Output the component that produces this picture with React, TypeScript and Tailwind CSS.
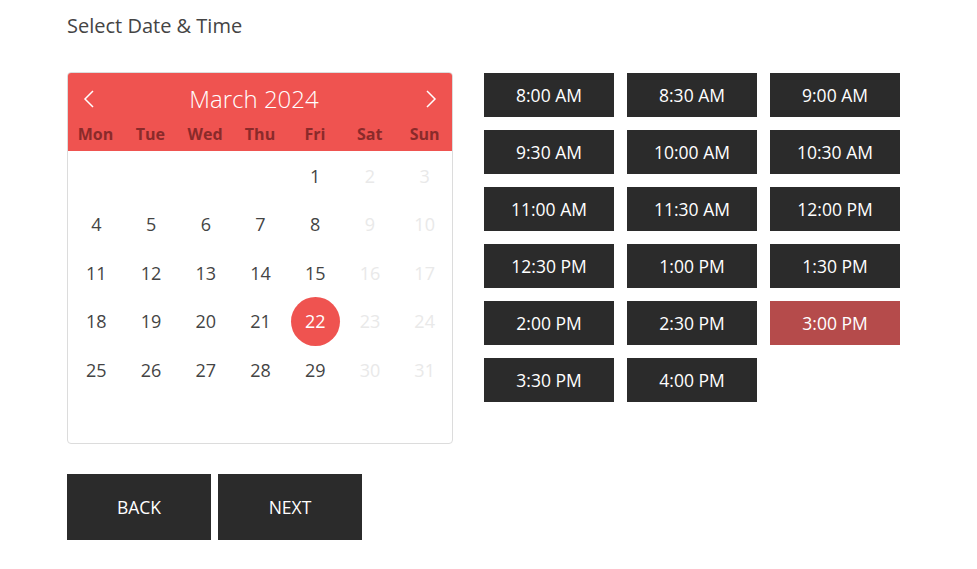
import React from "react";

const SLOTS = [
  "8:00 AM", "8:30 AM", "9:00 AM",
  "9:30 AM", "10:00 AM", "10:30 AM",
  "11:00 AM", "11:30 AM", "12:00 PM",
  "12:30 PM", "1:00 PM", "1:30 PM",
  "2:00 PM", "2:30 PM", "3:00 PM",
  "3:30 PM", "4:00 PM",
];

const DAYS = ["Mon", "Tue", "Wed", "Thu", "Fri", "Sat", "Sun"];

export default function App() {
  const [day, setDay] = React.useState(22);
  const [slot, setSlot] = React.useState("3:00 PM");

  // March 2024 starts on a Friday (index 4)
  const cells: (number | null)[] = [];
  for (let i = 0; i < 4; i++) cells.push(null);
  for (let d = 1; d <= 31; d++) cells.push(d);

  return (
    <div className="min-h-screen bg-white pl-[67px] pt-[12px] font-['Open_Sans',sans-serif]">
      <div className="text-[20px] leading-[28px] text-[#444]">Select Date &amp; Time</div>

      <div className="mt-[32px] flex gap-[31px]">
        <div className="w-[386px] h-[372px] rounded-[4px] border border-[#dcdcdc] overflow-hidden">
          <div className="bg-[#ef5350] h-[78px]">
            <div className="flex items-center justify-between px-[14px] pt-[2px] h-[50px]">
              <Chevron dir="left" />
              <div className="mr-[12px] text-[24px] font-light text-white leading-[32px]">March 2024</div>
              <Chevron dir="right" />
            </div>
            <div className="grid grid-cols-7 text-center text-[16px] font-bold text-[#8a2a2a] leading-[22px]">
              {DAYS.map(d => <div key={d}>{d}</div>)}
            </div>
          </div>
          <div className="grid grid-cols-7 pt-[1px] pl-[1px] auto-rows-[48.5px]">
            {cells.map((d, i) => {
              if (d === null) return <div key={i} />;
              const weekend = i % 7 >= 5;
              const selected = d === day;
              return (
                <div key={i} className="flex items-center justify-center">
                  <button
                    onClick={() => !weekend && setDay(d)}
                    className={`w-[49px] h-[49px] rounded-full text-[18px] flex items-center justify-center ${
                      selected ? "bg-[#ef5350] text-white" : weekend ? "text-[#e9e9e9]" : "text-[#444]"
                    }`}
                  >
                    {d}
                  </button>
                </div>
              );
            })}
          </div>
        </div>

        <div className="grid grid-cols-[130px_130px_130px] gap-[13px] content-start pt-[1px]">
          {SLOTS.map(s => (
            <button
              key={s}
              onClick={() => setSlot(s)}
              className={`h-[44px] text-[17.5px] text-white ${s === slot ? "bg-[#b54b4b]" : "bg-[#2b2b2b]"}`}
            >
              {s}
            </button>
          ))}
        </div>
      </div>

      <div className="mt-[30px] flex gap-[7px]">
        <button className="w-[144px] h-[66px] bg-[#2b2b2b] text-white text-[17.5px]">BACK</button>
        <button className="w-[144px] h-[66px] bg-[#2b2b2b] text-white text-[17.5px]">NEXT</button>
      </div>
    </div>
  );
}

function Chevron({ dir }: { dir: "left" | "right" }) {
  return (
    <svg width="14" height="20" viewBox="0 0 14 20" fill="none" stroke="white" strokeWidth="1.5">
      {dir === "left" ? <path d="M11 2 L3 10 L11 18" /> : <path d="M3 2 L11 10 L3 18" />}
    </svg>
  );
}
